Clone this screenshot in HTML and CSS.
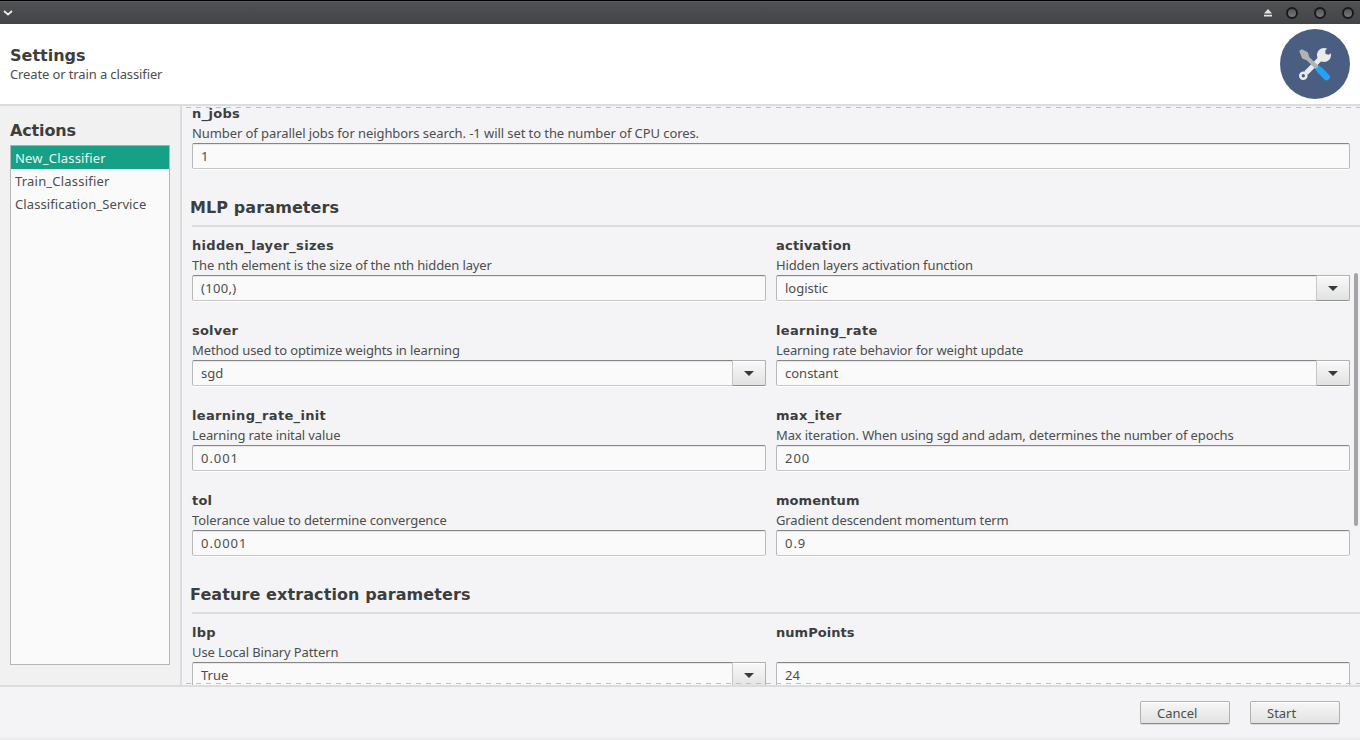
FILE: index.html
```html
<!DOCTYPE html>
<html lang="en">
<head>
<meta charset="utf-8">
<title>Settings</title>
<link rel="stylesheet" href="styles.css">
</head>
<body>
<div class="window">
  <div class="titlebar">
    <svg class="chevron" width="10" height="6" viewBox="0 0 10 6"><path d="M1 1l4 3.5L9 1" fill="none" stroke="#eee" stroke-width="1.7"/></svg>
    <svg class="eject" width="8" height="8" viewBox="0 0 8 8"><path d="M4 0L8 4.4H0zM0 5.8h8V7.5H0z" fill="#e4e4e4"/></svg>
    <span class="knob"></span><span class="knob"></span><span class="knob"></span>
  </div>
  <header class="header">
    <div>
      <h1 class="title">Settings</h1>
      <p class="text subtitle">Create or train a classifier</p>
    </div>
    <svg class="logo" width="70" height="70" viewBox="0 0 70 70">
      <circle cx="35" cy="35" r="35" fill="#4a5e82"/>
      <path d="M26 44L41 29" stroke="#ebebeb" stroke-width="5"/>
      <circle cx="44" cy="26" r="7.1" fill="#ebebeb"/>
      <path d="M45.3 21.5L50 16.8L54 21L49 25.8L45.5 25Z" fill="#4a5e82"/>
      <circle cx="23.3" cy="46.7" r="3" fill="#4a5e82" stroke="#ebebeb" stroke-width="2.6"/>
      <path d="M19.2 22L21.8 20.2L27.8 23.2L29.4 28.3L39.3 37.8L36.3 40.8L26.6 31.2L22.2 29.4Z" fill="#b2b2b2"/>
      <path d="M40 41.2L46.6 48" stroke="#23a4f2" stroke-width="6.6" stroke-linecap="round"/>
      <path d="M36 41.2L40 37.2" stroke="#23a4f2" stroke-width="2"/>
    </svg>
  </header>
  <main class="main">
    <aside class="sidebar">
      <h2 class="title actions">Actions</h2>
      <ul class="list">
        <li class="item selected">New_Classifier</li>
        <li class="item">Train_Classifier</li>
        <li class="item service">Classification_Service</li>
      </ul>
    </aside>
    <section class="content">
      <div class="field wide"><div class="label ident">n_jobs</div><div class="text spaced">Number of parallel jobs for neighbors search. -1 will set to the number of CPU cores.</div><div class="input">1</div></div>
      <h2 class="title section">MLP parameters</h2>
      <div class="rule"></div>
      <div class="grid">
        <div class="field"><div class="label ident">hidden_layer_sizes</div><div class="text">The nth element is the size of the nth hidden layer</div><div class="input tuple">(100,)</div></div>
        <div class="field"><div class="label">activation</div><div class="text">Hidden layers activation function</div><div class="input combo">logistic<span class="drop"></span></div></div>
        <div class="field"><div class="label">solver</div><div class="text">Method used to optimize weights in learning</div><div class="input combo">sgd<span class="drop"></span></div></div>
        <div class="field"><div class="label ident">learning_rate</div><div class="text">Learning rate behavior for weight update</div><div class="input combo">constant<span class="drop"></span></div></div>
        <div class="field"><div class="label ident">learning_rate_init</div><div class="text">Learning rate inital value</div><div class="input number">0.001</div></div>
        <div class="field"><div class="label ident">max_iter</div><div class="text">Max iteration. When using sgd and adam, determines the number of epochs</div><div class="input number">200</div></div>
        <div class="field"><div class="label">tol</div><div class="text">Tolerance value to determine convergence</div><div class="input number">0.0001</div></div>
        <div class="field"><div class="label plain">momentum</div><div class="text">Gradient descendent momentum term</div><div class="input number">0.9</div></div>
      </div>
      <h2 class="title section">Feature extraction parameters</h2>
      <div class="rule"></div>
      <div class="grid">
        <div class="field"><div class="label">lbp</div><div class="text">Use Local Binary Pattern</div><div class="input combo">True<span class="drop"></span></div></div>
        <div class="field"><div class="label plain">numPoints</div><div class="text"></div><div class="input">24</div></div>
      </div>
      <div class="dashes top"></div>
      <div class="dashes bottom"></div>
      <div class="thumb"></div>
    </section>
  </main>
  <footer class="footer">
    <div class="button">Cancel</div>
    <div class="button">Start</div>
  </footer>
</div>
</body>
</html>
```
FILE: styles.css
```css
* { box-sizing: border-box; }
body { margin: 0; overflow: hidden; }
h1, h2, p, ul { margin: 0; padding: 0; }
.window {
  width: 1360px; height: 740px; display: flex; flex-direction: column;
  background: #f4f4f7; color: #4c4e4d;
  font: 13px/20px "Noto Sans", sans-serif;
  white-space: nowrap;
}
.titlebar {
  height: 24px; flex: none; display: flex; align-items: center; padding: 1px 6px 0 3px;
  background: linear-gradient(#000 0 1px, #5b5c5f 1px 2px, #505154 2px, #434446);
}
.chevron { margin-right: auto; }
.eject { margin-right: 14px; }
.knob {
  width: 12px; height: 12px; border-radius: 50%; border: 2px solid #18191a;
  background: linear-gradient(#555, #77797a); margin-right: 16px;
}
.knob:last-child { margin-right: 0; }
.header {
  height: 82px; flex: none; display: flex; justify-content: space-between;
  padding: 5px 10px 0; background: #fff; border-bottom: 2px solid #dcdcde;
}
.title { font: bold 16px/20px "DejaVu Sans", sans-serif; color: #3c3e3d; letter-spacing: 0.1px; }
.header .title { margin-top: 17px; letter-spacing: 0; }
.subtitle { margin-top: -2px; }
.text { height: 20px; letter-spacing: -0.12px; }
.spaced { letter-spacing: -0.08px; }
.main { height: 579px; flex: none; display: flex; }
.sidebar { width: 182px; flex: none; background: #f1f1f1; border-right: 2px solid #dcdcde; padding: 15px 10px 20px; display: flex; flex-direction: column; }
.actions { letter-spacing: -0.15px; }
.list { flex: 1; margin-top: 4px; list-style: none; border: 1px solid #b5b7b6; background: #fafafa; }
.item { height: 23px; line-height: 24px; padding-left: 4px; letter-spacing: 0.2px; }
.service { letter-spacing: 0.1px; }
.selected { background: #16a085; color: #e9f6f3; box-shadow: 0 -1px #48dcbf; }
.content { position: relative; flex: 1; overflow: hidden; padding-left: 10px; }
.label { height: 20px; font: bold 13px/22px "DejaVu Sans", sans-serif; color: #3c3e3d; letter-spacing: 0.2px; }
.ident { letter-spacing: 0.32px; }
.plain { letter-spacing: 0.05px; }
.wide { margin: -3px 10px 0 0; }
.section { margin: 29px 0 0 -2px; }
.rule { height: 2px; margin: 7px 0 8px; background: #dcdcde; }
.grid { display: grid; grid-template-columns: 574px 574px; gap: 19px 10px; }
.input {
  height: 26px; line-height: 25px; padding-left: 8px; background: #fafafa;
  border: 1px solid #b7b9b8; border-top-color: #858786; border-bottom-color: #c5c7c6; border-radius: 2px;
  box-shadow: 0 1px #fff, inset 0 1px #e7e7e7;
}
.number { letter-spacing: 0.95px; }
.tuple { letter-spacing: 0.3px; }
.combo { display: flex; justify-content: space-between; }
.drop {
  width: 34px; height: 26px; margin: -1px -1px 0 0; border: 1px solid #b0b2b1; border-left-color: #c5c7c6; border-bottom-color: #8d8f8e;
  border-radius: 0 2px 2px 0; background: linear-gradient(#f8f8f8, #e1e3e1);
  display: grid; place-items: center; box-shadow: inset 0 1px #fff;
}
.drop::before { content: ""; border: 5px solid transparent; border-top-color: #393b3a; border-bottom: 0; }
.dashes { position: absolute; left: 4px; right: 0; height: 1px; background: repeating-linear-gradient(90deg, #bfc0c1 0 5px, transparent 5px 10px); }
.top { top: 1px; }
.bottom { bottom: 1px; }
.thumb { position: absolute; right: 2px; top: 167px; width: 4px; height: 253px; border-radius: 2px; background: #a4a5a6; }
.footer {
  flex: 1; display: flex; justify-content: flex-end; gap: 20px; padding: 14px 20px 0;
  border-top: 2px solid #dcdcde; background: linear-gradient(#f4f4f7 48px, #e9e9eb);
}
.button {
  width: 90px; height: 23px; line-height: 23px; padding-left: 16px; border: 1px solid #b0b2b1; border-bottom-color: #8a8c8b;
  border-radius: 2px; background: linear-gradient(#f6f6f6, #e1e3e1); box-shadow: inset 0 1px #fff, 0 1px #d9d9dc;
}
```
